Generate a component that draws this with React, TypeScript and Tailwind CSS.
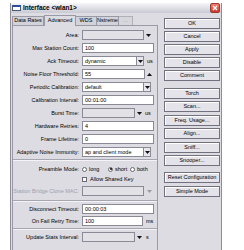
import React from 'react';

function Arrow({ up, dim }: { up?: boolean; dim?: boolean }) {
  return (
    <svg width="5" height="3" viewBox="0 0 5 3" className="shrink-0">
      <polygon points={up ? '0,3 5,3 2.5,0' : '0,0 5,0 2.5,3'} fill={dim ? '#9a9aa4' : '#111'} />
    </svg>
  );
}

function Field({ w, value, grey }: { w: string; value?: string; grey?: boolean }) {
  return (
    <div className={`${w} h-[10px] shrink-0 border border-[#8a8a96] ${grey ? 'bg-[#e2e2e6]' : 'bg-white'} pl-[2px] leading-[8px] whitespace-nowrap overflow-hidden`}>
      {value}
    </div>
  );
}

function Combo({ w, value }: { w: string; value: string }) {
  return (
    <div className={`${w} h-[10px] shrink-0 flex border border-[#8a8a96] bg-white`}>
      <div className="flex-1 pl-[2px] leading-[8px] whitespace-nowrap overflow-hidden">{value}</div>
      <div className="w-[7px] border-l border-[#8a8a96] bg-[#e6e6ec] flex items-center justify-center">
        <Arrow />
      </div>
    </div>
  );
}

function Row({ label, dim, className = '', children }: { label: string; dim?: boolean; className?: string; children?: React.ReactNode }) {
  return (
    <div className={`flex items-center h-[10px] ${className}`}>
      <div className={`w-[69px] shrink-0 text-right pr-[3px] leading-[10px] whitespace-nowrap ${dim ? 'text-[#a0a0aa]' : ''}`}>{label}</div>
      {children}
    </div>
  );
}

function Sep({ className = '' }: { className?: string }) {
  return <div className={`h-[2px] border-t border-[#a6a6b0] border-b border-b-[#f4f4f8] ${className}`} />;
}

function Radio({ on }: { on?: boolean }) {
  return (
    <div className="w-[5px] h-[5px] rounded-full border border-[#6a6a76] bg-white flex items-center justify-center shrink-0">
      {on && <div className="w-[2px] h-[2px] rounded-full bg-black" />}
    </div>
  );
}

function Btn({ label, className = '' }: { label: string; className?: string }) {
  return (
    <div className={`h-[11px] border border-[#70707e] bg-[#e3e3e9] shadow-[inset_1px_1px_0_#ffffff] flex items-center justify-center leading-none whitespace-nowrap ${className}`}>
      {label}
    </div>
  );
}

export default function App() {
  return (
    <div className="w-[244px] h-[250px] bg-white overflow-hidden font-['Liberation_Sans',Arial,sans-serif] text-[5.5px] text-black">
      <div className="ml-[10px] mt-[3px] w-[212px] h-[247px] bg-[#dcdce2] border-l border-r border-[#8e8e9a] flex flex-col">
        {/* title bar */}
        <div className="h-[10px] flex items-center bg-gradient-to-b from-[#f6f6f9] to-[#c9c9d3]">
          <div className="ml-[1px] w-[9px] h-[6px] border border-[#4a5a7a] border-t-2 border-t-[#2b4c9a] bg-white" />
          <div className="ml-[2px] font-bold text-[6.4px] leading-none">Interface &lt;wlan1&gt;</div>
          <div className="ml-auto mr-[1px] w-[10px] h-[10px] rounded-[2px] border border-[#9a3a30] bg-gradient-to-b from-[#f08070] to-[#c8382a] flex items-center justify-center">
            <svg width="6" height="6" viewBox="0 0 6 6">
              <path d="M1 1 L5 5 M5 1 L1 5" stroke="#fff" strokeWidth="1.3" />
            </svg>
          </div>
        </div>

        <div className="flex flex-1 min-h-0">
          {/* tabs + panel */}
          <div className="ml-[1px] w-[146px] flex flex-col pt-[2px]">
            <div className="flex items-end h-[10px]">
              <div className="w-[32px] h-[9px] border border-b-0 border-[#9a9aa6] bg-[#d2d2da] flex items-center justify-center leading-none">Data Rates</div>
              <div className="w-[32px] h-[11px] -mb-px relative z-10 border border-b-0 border-[#9a9aa6] bg-[#dcdce2] flex items-center justify-center leading-none">Advanced</div>
              <div className="w-[21px] h-[9px] border border-b-0 border-l-0 border-[#9a9aa6] bg-[#d2d2da] flex items-center justify-center leading-none">WDS</div>
              <div className="w-[22px] h-[9px] border border-b-0 border-l-0 border-[#9a9aa6] bg-[#d2d2da] flex items-center justify-center leading-none">Nstreme</div>
              <div className="w-[14px] h-[9px] border border-b-0 border-l-0 border-[#b0b0ba] bg-[#d6d6dc] text-[#a0a0aa] flex items-center justify-center leading-none">...</div>
            </div>
            <div className="flex-1 border border-b-0 border-[#9a9aa6] pt-[4px] flex flex-col">
              <Row label="Area:">
                <Field w="w-[62px]" grey />
                <div className="ml-[2px]"><Arrow /></div>
              </Row>
              <Row label="Max Station Count:" className="mt-[3px]">
                <Field w="w-[72px]" value="100" />
              </Row>
              <Row label="Ack Timeout:" className="mt-[3px]">
                <Combo w="w-[62px]" value="dynamic" />
                <div className="ml-[3px]">us</div>
              </Row>
              <Row label="Noise Floor Threshold:" className="mt-[3px]">
                <Field w="w-[63px]" value="55" />
                <div className="ml-[2px]"><Arrow up /></div>
              </Row>
              <Row label="Periodic Calibration:" className="mt-[3px]">
                <Combo w="w-[69px]" value="default" />
              </Row>
              <Row label="Calibration Interval:" className="mt-[3px]">
                <Field w="w-[72px]" value="00:01:00" />
              </Row>
              <Row label="Burst Time:" className="mt-[3px]">
                <Field w="w-[53px]" grey />
                <div className="ml-[2px]"><Arrow /></div>
                <div className="ml-[3px]">us</div>
              </Row>
              <Row label="Hardware Retries:" className="mt-[3px]">
                <Field w="w-[72px]" value="4" />
              </Row>
              <Row label="Frame Lifetime:" className="mt-[3px]">
                <Field w="w-[72px]" value="0" />
              </Row>
              <Row label="Adaptive Noise Immunity:" className="mt-[3px]">
                <Combo w="w-[69px]" value="ap and client mode" />
              </Row>

              <Sep className="mt-[2px]" />

              <Row label="Preamble Mode:" className="mt-[3px]">
                <div className="flex items-center w-[26px]"><Radio /><span className="ml-[2px]">long</span></div>
                <div className="flex items-center w-[22px]"><Radio on /><span className="ml-[2px]">short</span></div>
                <div className="flex items-center"><Radio /><span className="ml-[2px]">both</span></div>
              </Row>
              <Row label="">
                <div className="w-[5px] h-[5px] border border-[#6a6a76] bg-white shrink-0" />
                <span className="ml-[3px] whitespace-nowrap">Allow Shared Key</span>
              </Row>
              <Row label="Station Bridge Clone MAC:" dim className="mt-[2px]">
                <Field w="w-[62px]" grey />
                <div className="ml-[3px]"><Arrow dim /></div>
              </Row>

              <Sep className="mt-[4px]" />

              <Row label="Disconnect Timeout:" className="mt-[2px]">
                <Field w="w-[72px]" value="00:00:03" />
              </Row>
              <Row label="On Fail Retry Time:" className="mt-[2px]">
                <Field w="w-[61px]" value="100" />
                <div className="ml-[3px]">ms</div>
              </Row>

              <Sep className="mt-[2px]" />

              <Row label="Update Stats Interval:" className="mt-[2px]">
                <Field w="w-[53px]" grey />
                <div className="ml-[2px]"><Arrow /></div>
                <div className="ml-[4px]">s</div>
              </Row>
            </div>
          </div>

          {/* buttons */}
          <div className="ml-[6px] w-[56px] flex flex-col pt-[5px]">
            <Btn label="OK" />
            <Btn label="Cancel" className="mt-[2px]" />
            <Btn label="Apply" className="mt-[2px]" />
            <Btn label="Disable" className="mt-[2px]" />
            <Btn label="Comment" className="mt-[2px]" />
            <Btn label="Torch" className="mt-[7px]" />
            <Btn label="Scan..." className="mt-[2px]" />
            <Btn label="Freq. Usage..." className="mt-[3px]" />
            <Btn label="Align..." className="mt-[2px]" />
            <Btn label="Sniff..." className="mt-[3px]" />
            <Btn label="Snooper..." className="mt-[2px]" />
            <Btn label="Reset Configuration" className="mt-[6px]" />
            <Btn label="Simple Mode" className="mt-[3px]" />
          </div>
        </div>
      </div>
    </div>
  );
}
